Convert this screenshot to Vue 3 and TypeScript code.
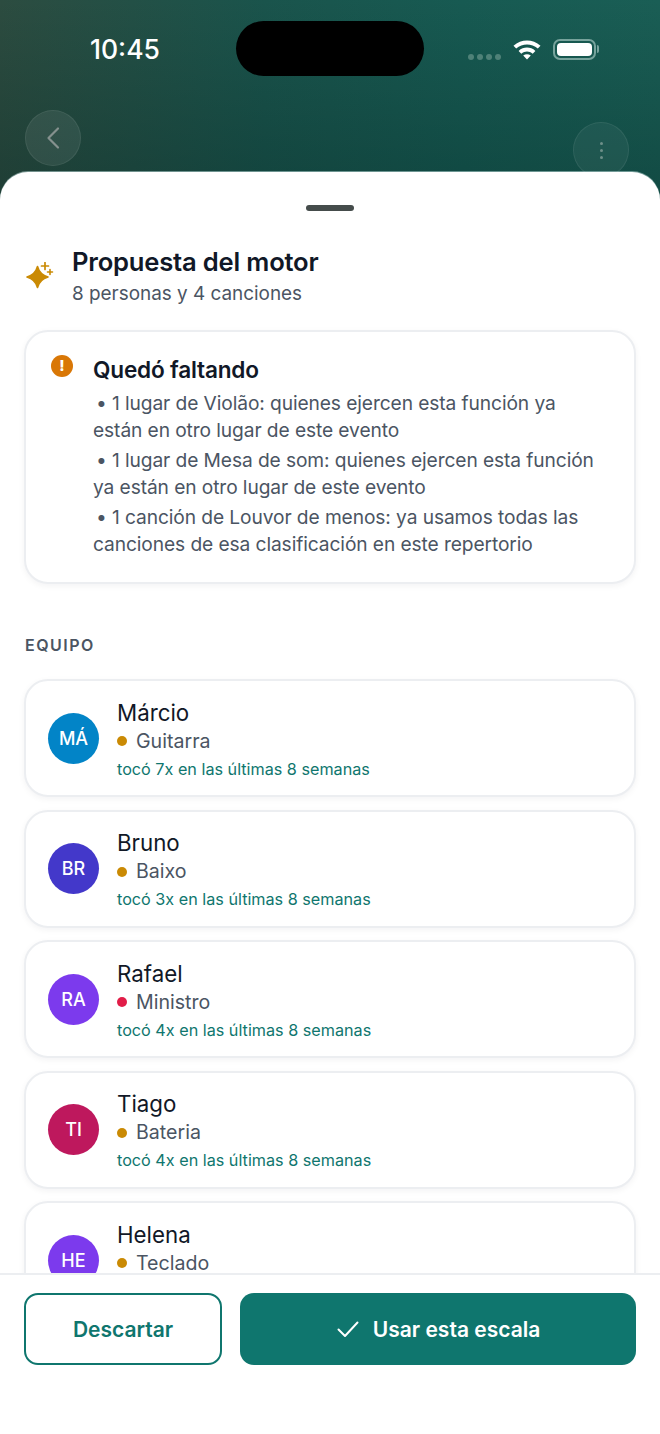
<template>
  <div class="screen">
    <header class="top">
      <div class="status">
        <span class="time">10:45</span>
        <div class="island"></div>
        <div class="status-icons">
          <div class="signal"><i v-for="n in 4" :key="n"></i></div>
          <svg class="wifi" width="28" height="22" viewBox="0 0 28 21">
            <path d="M0.5 7.2C8.2 .2 19.8 .2 27.5 7.2L24.8 10C18.6 4.6 9.4 4.6 3.2 10Z" fill="#fff" />
            <path d="M5.6 12.4C10.6 8 17.4 8 22.4 12.4L19.7 15.2C16.2 12.2 11.8 12.2 8.3 15.2Z" fill="#fff" />
            <path d="M10.2 17C12.5 15.2 15.5 15.2 17.8 17L14 21Z" fill="#fff" />
          </svg>
          <div class="battery"><b></b></div>
          <span class="battery-tip"></span>
        </div>
      </div>
      <div class="nav">
        <button class="round back">
          <svg width="16" height="24" viewBox="0 0 16 24" fill="none">
            <path d="M13 2.5 3.5 12 13 21.5" stroke="#85918e" stroke-width="2.2" stroke-linecap="round" stroke-linejoin="round" />
          </svg>
        </button>
        <button class="round more"><i></i><i></i><i></i></button>
      </div>
    </header>

    <main class="sheet">
      <div class="scroll">
        <div class="handle"></div>
        <div class="title-row">
          <svg class="spark" width="30" height="30" viewBox="0 0 30 30">
            <path d="M13.5 4.5Q15.6 12.6 24 15Q15.6 17.4 13.5 25.5Q11.4 17.4 3 15Q11.4 12.6 13.5 4.5Z" fill="#ca8a04" stroke="#ca8a04" stroke-width="1.6" stroke-linejoin="round" />
            <path d="M21 0.5V7.5M17.5 4H24.5" stroke="#ca8a04" stroke-width="1.7" stroke-linecap="round" />
            <path d="M26 7.5V12.5M23.5 10H28.5" stroke="#ca8a04" stroke-width="1.6" stroke-linecap="round" />
          </svg>
          <div>
            <h1>Propuesta del motor</h1>
            <p class="sub">8 personas y 4 canciones</p>
          </div>
        </div>

        <section class="warn card">
          <span class="warn-icon">!</span>
          <div class="warn-body">
            <h2>Quedó faltando</h2>
            <p v-for="line in missing" :key="line">• {{ line }}</p>
          </div>
        </section>

        <h3 class="label">EQUIPO</h3>

        <div class="list">
          <article v-for="m in team" :key="m.name" class="card person">
            <div class="avatar" :style="{ background: m.color }">{{ m.initials }}</div>
            <div class="info">
              <div class="name">{{ m.name }}</div>
              <div class="role"><i :style="{ background: m.dot }"></i>{{ m.role }}</div>
              <div class="played"><template v-if="m.times">tocó {{ m.times }}x en las últimas 8 semanas</template></div>
            </div>
          </article>
        </div>
      </div>

      <footer class="actions">
        <button class="btn ghost">Descartar</button>
        <button class="btn solid">
          <svg width="24" height="24" viewBox="0 0 24 24" fill="none">
            <path d="M2.5 12.5 9 19 21.5 5.5" stroke="#fff" stroke-width="2" stroke-linecap="round" stroke-linejoin="round" />
          </svg>
          Usar esta escala
        </button>
      </footer>
    </main>
  </div>
</template>

<script setup lang="ts">
interface Member {
  name: string;
  initials: string;
  role: string;
  times?: number; // la última tarjeta queda tapada por el pie
  color: string;
  dot: string;
}

const missing: string[] = [
  "1 lugar de Violão: quienes ejercen esta función ya están en otro lugar de este evento",
  "1 lugar de Mesa de som: quienes ejercen esta función ya están en otro lugar de este evento",
  "1 canción de Louvor de menos: ya usamos todas las canciones de esa clasificación en este repertorio",
];

const amber = "#ca8a04";
const team: Member[] = [
  { name: "Márcio", initials: "MÁ", role: "Guitarra", times: 7, color: "#0284c7", dot: amber },
  { name: "Bruno", initials: "BR", role: "Baixo", times: 3, color: "#4338ca", dot: amber },
  { name: "Rafael", initials: "RA", role: "Ministro", times: 4, color: "#7c3aed", dot: "#e11d48" },
  { name: "Tiago", initials: "TI", role: "Bateria", times: 4, color: "#be185d", dot: amber },
  { name: "Helena", initials: "HE", role: "Teclado", color: "#7c3aed", dot: amber },
];
</script>

<style>
html,
body {
  margin: 0;
  background: #fff;
}
</style>

<style scoped>
.screen {
  position: relative;
  width: 660px;
  height: 1434px;
  overflow: hidden;
  display: flex;
  flex-direction: column;
  font-family: Inter, "Noto Sans", sans-serif;
  color: #111827;
  background: #fff;
}

.top {
  height: 210px;
  margin-bottom: -38px;
  flex: none;
  background:
    linear-gradient(180deg, rgba(0, 30, 28, 0) 0%, rgba(0, 30, 28, 0.28) 85%),
    linear-gradient(90deg, #2c4c40 0%, #1a544c 40%, #175a52 70%, #1a5e55 100%);
}

.status {
  height: 76px;
  padding: 21px 0 0 90px;
  box-sizing: border-box;
  display: flex;
  align-items: flex-start;
}

.time {
  width: 146px;
  margin-top: 12px;
  font-size: 26.5px;
  line-height: 32px;
  font-weight: 500;
  color: #fff;
}

.island {
  width: 188px;
  height: 55px;
  border-radius: 28px;
  background: #000;
}

.status-icons {
  display: flex;
  align-items: center;
  margin-left: 44px;
  margin-top: 17px;
}

.signal {
  display: flex;
  gap: 3px;
  margin-top: 16px;
  margin-right: 12px;
}

.signal i {
  width: 6px;
  height: 6px;
  border-radius: 3px;
  background: #4f8178;
}

.wifi {
  margin-right: 12px;
}

.battery {
  width: 43px;
  height: 21px;
  box-sizing: border-box;
  border: 2px solid #77a39c;
  border-radius: 7px;
  padding: 2px;
}

.battery b {
  display: block;
  height: 100%;
  border-radius: 4px;
  background: #fff;
}

.battery-tip {
  width: 2px;
  height: 8px;
  margin-left: 1px;
  border-radius: 0 2px 2px 0;
  background: #77a39c;
}

.nav {
  display: flex;
  justify-content: space-between;
  align-items: flex-start;
  padding: 34px 31px 0 25px;
}

.round {
  width: 56px;
  height: 56px;
  padding: 0;
  border-radius: 50%;
  border: 1px solid rgba(255, 255, 255, 0.07);
  background: rgba(255, 255, 255, 0.08);
  display: flex;
  align-items: center;
  justify-content: center;
}

.more {
  margin-top: 12px;
  flex-direction: column;
  gap: 4px;
  background: rgba(255, 255, 255, 0.05);
}

.more i {
  width: 3px;
  height: 3px;
  border-radius: 50%;
  background: #6e8f89;
}

.sheet {
  position: relative;
  flex: 1;
  min-height: 0;
  display: flex;
  flex-direction: column;
  border-radius: 28px 28px 0 0;
  background: #fff;
  overflow: hidden;
  box-shadow: 0 -1px 0 rgba(200, 225, 225, 0.5);
}

.scroll {
  flex: 1;
  min-height: 0;
  overflow: hidden;
  padding: 33px 24px 0;
}

.handle {
  width: 48px;
  height: 6px;
  margin: 0 auto 35px;
  border-radius: 3px;
  background: #454c4b;
}

.title-row {
  display: flex;
  align-items: center;
  gap: 18px;
  margin-bottom: 22px;
}

.spark {
  flex: none;
}

h1 {
  margin: 0;
  font-size: 25.6px;
  line-height: 32px;
  font-weight: 600;
  letter-spacing: -0.2px;
  color: #111827;
}

.sub {
  margin: 2px 0 0;
  font-size: 18.9px;
  line-height: 28px;
  color: #4b5563;
}

.card {
  box-sizing: border-box;
  border: 2px solid #eceef1;
  border-radius: 24px;
  background: #fff;
  box-shadow: 0 2px 6px rgba(17, 24, 39, 0.05);
}

.warn {
  height: 254px;
  display: flex;
  gap: 20px;
  padding: 23px 24px 0 25px;
  margin-bottom: 49px;
}

.warn-icon {
  width: 22px;
  height: 22px;
  flex: none;
  border-radius: 50%;
  background: #d97706;
  color: #fff;
  font-size: 15px;
  font-weight: 800;
  line-height: 22px;
  text-align: center;
}

.warn-body {
  flex: 1;
  min-width: 0;
}

h2 {
  margin: 0 0 5px;
  font-size: 22.6px;
  line-height: 30px;
  font-weight: 600;
  letter-spacing: -0.2px;
}

.warn-body p {
  margin: 0 0 3px;
  font-size: 19.2px;
  line-height: 27px;
  color: #4b5563;
  letter-spacing: -0.1px;
  text-indent: 3px;
}

.label {
  margin: 0 0 22px 1px;
  font-size: 16px;
  line-height: 24px;
  font-weight: 600;
  letter-spacing: 1.5px;
  color: #4b5563;
}

.list {
  display: flex;
  flex-direction: column;
  gap: 12.5px;
}

.person {
  height: 118px;
  flex: none;
  display: flex;
  align-items: center;
  gap: 18px;
  padding: 0 22px;
}

.avatar {
  width: 51px;
  height: 51px;
  flex: none;
  border-radius: 50%;
  color: #fff;
  font-size: 18px;
  font-weight: 500;
  display: flex;
  align-items: center;
  justify-content: center;
}

.info {
  padding-top: 3px;
}

.name {
  font-size: 22.3px;
  line-height: 28px;
}

.role {
  display: flex;
  align-items: center;
  font-size: 19.6px;
  line-height: 27px;
  color: #4b5563;
  margin-top: 1px;
}

.role i {
  width: 10px;
  height: 10px;
  border-radius: 50%;
  margin-right: 9px;
}

.played {
  height: 24px;
  margin-top: 2px;
  font-size: 16.2px;
  line-height: 24px;
  color: #0f766e;
}

.actions {
  height: 161px;
  flex: none;
  box-sizing: border-box;
  display: flex;
  gap: 18px;
  padding: 18px 24px 0;
  border-top: 2px solid #eceef1;
  background: #fff;
}

.btn {
  height: 72px;
  box-sizing: border-box;
  border-radius: 14px;
  font-family: inherit;
  font-size: 21px;
  font-weight: 600;
  display: flex;
  align-items: center;
  justify-content: center;
}

.ghost {
  width: 198px;
  border: 2px solid #0f766e;
  background: #fff;
  color: #0f766e;
}

.solid {
  flex: 1;
  gap: 13px;
  border: 0;
  background: #0f766e;
  color: #fff;
}
</style>
